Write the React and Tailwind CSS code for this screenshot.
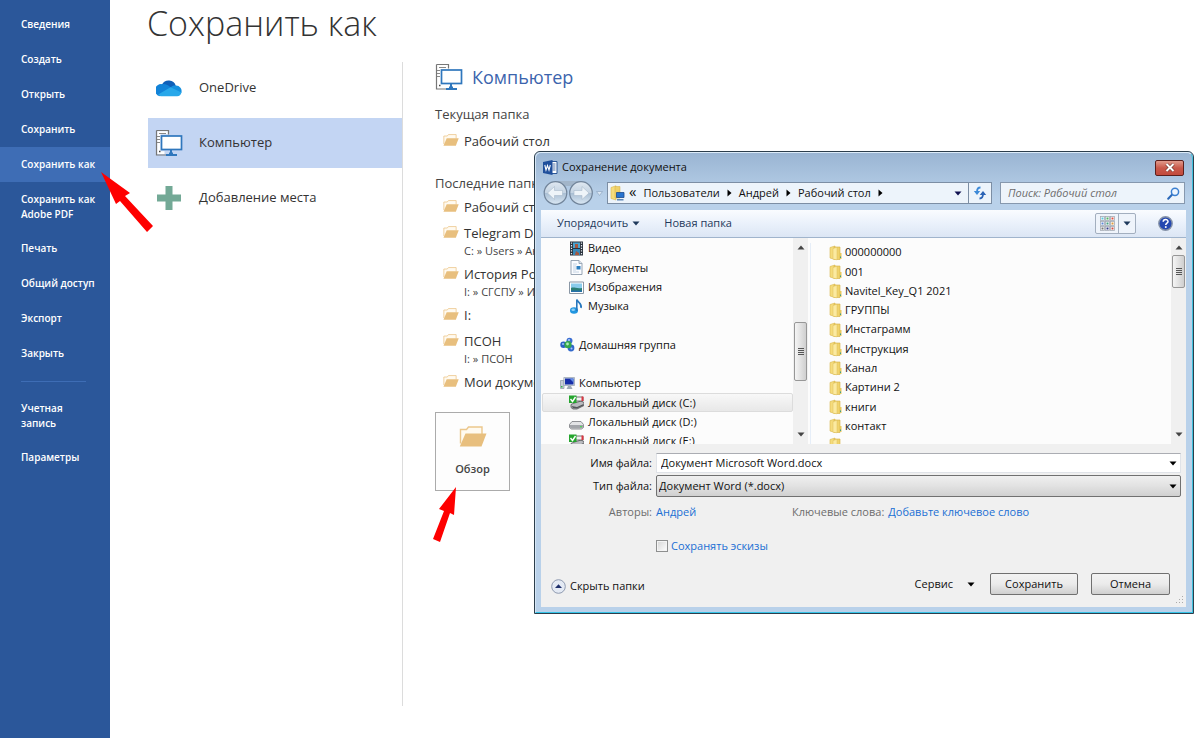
import React, { useState } from 'react';

const menuItems = [
  { label: 'Сведения' },
  { label: 'Создать' },
  { label: 'Открыть' },
  { label: 'Сохранить' },
  { label: 'Сохранить как', active: true },
  { label: 'Сохранить как Adobe PDF', tall: true },
  { label: 'Печать' },
  { label: 'Общий доступ' },
  { label: 'Экспорт' },
  { label: 'Закрыть' },
];

const accountItems = [
  { label: 'Учетная запись', tall: true, narrow: true },
  { label: 'Параметры' },
];

const recentFolders = [
  { name: 'Рабочий стол' },
  { name: 'Telegram Desktop', path: 'C: » Users » Андрей' },
  { name: 'История России', path: 'I: » СГСПУ » История' },
  { name: 'I:' },
  { name: 'ПСОН', path: 'I: » ПСОН' },
  { name: 'Мои документы' },
];

const files = [
  '000000000',
  '001',
  'Navitel_Key_Q1 2021',
  'ГРУППЫ',
  'Инстаграмм',
  'Инструкция',
  'Канал',
  'Картини 2',
  'книги',
  'контакт',
];

/* ---------- icons ---------- */

const CloudIcon = () => (
  <svg width="26" height="18" viewBox="0 0 26 18">
    <path d="M6 5.5a7.5 7.5 0 0 1 13.8 1.2L14 11 5 9z" fill="#0f5fb8" />
    <path d="M6.2 5.2c3-.6 5 .6 7 2L16 9 4 17.3A6 6 0 0 1 6.2 5.2z" fill="#1283d8" />
    <path d="M14.5 8.5c2-1.8 3.6-2 5.3-1.9a5.6 5.6 0 0 1 5.5 7.4L20 13z" fill="#1490df" />
    <path d="M2.2 15.5 14.5 8.3l11 5.2c-.6 2.4-2 3.8-4.3 3.8H6c-1.6 0-2.8-.6-3.8-1.8z" fill="#28a8ea" />
  </svg>
);

const ComputerIcon = ({ fill = '#ffffff' }) => (
  <svg width="28" height="28" viewBox="0 0 28 28" fill="none">
    <path d="M2.2 2.2h10.6v3H5.5v17h4v3H2.2z" fill={fill} />
    <path d="M1.5 1.5h12v4M1.5 1.5v24.5h10" stroke="#777" strokeWidth="1.2" />
    <path d="M4 4.5h7M2 7.5h3M2 10.5h3M2 13.5h3" stroke="#888" strokeWidth="1.1" />
    <path d="M4 22.5h1.5" stroke="#444" strokeWidth="1.5" />
    <rect x="6.5" y="7" width="20" height="13.5" fill={fill} stroke="#2f77bd" strokeWidth="1.7" />
    <path d="M16 21v4M11 26h11" stroke="#2f77bd" strokeWidth="2" />
    <path d="M14 23.5h4v2h-4z" fill="#2f77bd" />
  </svg>
);

const PlusIcon = () => (
  <svg width="26" height="26" viewBox="0 0 26 26">
    <path d="M9.5 1h7v8.5H25v7h-8.5V25h-7v-8.5H1v-7h8.5z" fill="#73a996" />
  </svg>
);

const OpenFolderIcon = ({ className }) => (
  <svg className={className} viewBox="0 0 28 21" preserveAspectRatio="none">
    <path d="M1.5 17.5V3.5h6l2-2.5H23v7" fill="#fffaf0" stroke="#ecc78c" strokeWidth="1.4" />
    <path d="M6.5 7.5H27.5L22.5 20.5H.8z" fill="#e8bf7e" />
  </svg>
);

const FolderIcon = () => (
  <svg width="13" height="16" viewBox="0 0 13 16">
    <path d="M1 2.5 6 1v13.5L1 13z" fill="#f5dc7c" stroke="#d9b74e" strokeWidth=".6" />
    <path d="M5 2h6v12.5H5z" fill="#f0d36c" stroke="#d3ae43" strokeWidth=".6" />
    <path d="M4 3.5 8 2.3v12.5L4 14.2z" fill="#fbeaa0" stroke="#dcbf5d" strokeWidth=".5" />
    <path d="M10.5 8H12.5v6h-2z" fill="#e9c95c" />
    <path d="M11 11.5h1v1.5h-1z" fill="#3e9c8f" />
  </svg>
);

const WordIcon = () => (
  <svg width="15" height="15" viewBox="0 0 15 15">
    <path d="M8 1.5h6v12H8z" fill="#fff" stroke="#2b5797" />
    <path d="M9.5 4h3M9.5 6h3M9.5 8h3M9.5 10h3" stroke="#2b5797" strokeWidth=".8" />
    <path d="M0 2 9.5 0v15L0 13z" fill="#1f4f9c" />
    <path d="m1.8 5 1.2 5 1.5-4.5L6 10l1.3-5" fill="none" stroke="#fff" strokeWidth="1.1" />
  </svg>
);

const NavArrows = () => (
  <svg width="60" height="26" viewBox="0 0 60 26">
    <defs>
      <linearGradient id="orb" x1="0" y1="0" x2="0" y2="1">
        <stop offset="0" stopColor="#dfe8f1" />
        <stop offset=".48" stopColor="#c5d4e3" />
        <stop offset=".52" stopColor="#aabfd4" />
        <stop offset="1" stopColor="#dbe8f4" />
      </linearGradient>
    </defs>
    <path d="M12 1h26v5H12z" fill="#a2b5c9" />
    <circle cx="12.5" cy="13" r="11.3" fill="url(#orb)" stroke="#71849a" strokeWidth="1.2" />
    <circle cx="38" cy="13" r="11.3" fill="url(#orb)" stroke="#71849a" strokeWidth="1.2" />
    <path d="m4.5 13 7-6.5v4h8v5h-8v4z" fill="#eef4f9" stroke="#a9bacb" strokeWidth=".6" />
    <path d="m46 13-7-6.5v4h-8v5h8v4z" fill="#eef4f9" stroke="#a9bacb" strokeWidth=".6" />
    <path d="M53.5 11.5h6L56.5 15.5z" fill="#dce8f5" stroke="#8fa6c2" strokeWidth=".7" />
  </svg>
);

const PathFolderIcon = () => (
  <svg width="15" height="16" viewBox="0 0 15 16">
    <path d="M1 2.5 6 .8V15l-5-1.5z" fill="#f5dc7c" stroke="#d9b74e" strokeWidth=".6" />
    <path d="M5 1.5h5V13H5z" fill="#efd168" stroke="#d3ae43" strokeWidth=".5" />
    <path d="M6.5 7.5h7.5v5H6.5z" fill="#2673cf" stroke="#1d4a8c" strokeWidth=".8" />
    <path d="M7 14h6.5v1.5H7z" fill="#5b86b8" />
  </svg>
);

const Caret = ({ color = '#000' }) => (
  <svg width="8" height="5" viewBox="0 0 8 5" className="shrink-0">
    <path d="M.5.5h7L4 4.5z" fill={color} />
  </svg>
);

const RightCaret = () => (
  <svg width="5" height="8" viewBox="0 0 5 8" className="shrink-0">
    <path d="M.5.5v7L4.5 4z" fill="#000" />
  </svg>
);

const RefreshIcon = () => (
  <svg width="14" height="14" viewBox="0 0 14 14" fill="none">
    <path d="M7.5 1.5C5 1.5 4 3 4 6" stroke="#3d8ad8" strokeWidth="1.8" />
    <path d="M.8 5h6.4L4 9z" fill="#3d8ad8" />
    <path d="M6.5 12.5C9 12.5 10 11 10 8" stroke="#2a63b5" strokeWidth="1.8" />
    <path d="M6.8 9h6.4L10 5z" fill="#2a63b5" />
  </svg>
);

const SearchIcon = () => (
  <svg width="13" height="13" viewBox="0 0 13 13" fill="none">
    <path d="m1.2 11.8 4-4.3" stroke="#2b68b8" strokeWidth="2" strokeLinecap="round" />
    <circle cx="8" cy="4.8" r="3.6" fill="#eef6ff" stroke="#3a7fd0" strokeWidth="1.5" />
  </svg>
);

const ViewIcon = () => {
  const colors = ['#59c8e0', '#4fb563', '#e05040', '#5a86d6', '#3fa080', '#e09a3f', '#777', '#333a8a', '#d04d42'];
  return (
    <svg width="15" height="15" viewBox="0 0 15 15">
      {colors.map((c, i) => {
        const x = (i % 3) * 5;
        const y = Math.floor(i / 3) * 5;
        return (
          <g key={i}>
            <rect x={x + 0.5} y={y + 0.5} width="4" height="4" fill="#fff" stroke="#a3abb5" strokeWidth=".8" />
            <rect x={x + 1.5} y={y + 1.5} width="2" height="2" fill={c} />
          </g>
        );
      })}
    </svg>
  );
};

const HelpIcon = () => (
  <svg width="15" height="15" viewBox="0 0 15 15">
    <circle cx="7.5" cy="7.5" r="6.7" fill="#2448b0" stroke="#8693a8" strokeWidth="1.4" />
    <path d="M5.2 5.8c0-3 4.8-3 4.8-.3 0 1.7-2.3 1.6-2.3 3.5" fill="none" stroke="#fff" strokeWidth="1.5" />
    <path d="M6.9 10.2h1.7v1.7H6.9z" fill="#fff" />
  </svg>
);

const VideoIcon = () => (
  <svg width="15" height="15" viewBox="0 0 15 15">
    <path d="M1 .5h13v14H1z" fill="#2b333d" />
    <path d="M4 1.5h7v5.5H4z" fill="#4aa3cf" />
    <path d="M4 8h7v6H4z" fill="#3889b8" />
    <path d="M6 3h3v4H6zM7 10l3 2v2H6z" fill="#a5573f" />
    <path d="M2.5 1.5v12M12.5 1.5v12" stroke="#e4ebf2" strokeWidth="1.2" strokeDasharray="1.3 1.3" />
  </svg>
);

const DocumentIcon = () => (
  <svg width="15" height="15" viewBox="0 0 15 15">
    <path d="M2 .5h8l3 3v11H2z" fill="#fafcff" stroke="#8c9bab" strokeWidth=".9" />
    <path d="M10 .5v3h3" fill="#dbe4ee" stroke="#8c9bab" strokeWidth=".8" />
    <path d="M4 4h4M4 6h3M4 8h3M4 10h3M4 12h6" stroke="#b8c9dc" strokeWidth=".8" />
    <path d="M7.5 6h4v3.5h-4z" fill="#2d7fc0" />
  </svg>
);

const PictureIcon = () => (
  <svg width="15" height="15" viewBox="0 0 15 15">
    <path d="M.5 2h14v11.5H.5z" fill="#fff" stroke="#8a97a5" />
    <path d="M2 3.5h11V12H2z" fill="#8accec" />
    <path d="M2 8c3-1.5 5 1 11 0v4H2z" fill="#2b7f74" />
    <path d="M2 10.5h11V12H2z" fill="#2771ab" />
  </svg>
);

const MusicIcon = () => (
  <svg width="15" height="15" viewBox="0 0 15 15">
    <ellipse cx="5" cy="11.5" rx="4" ry="3.2" fill="#2196e0" />
    <ellipse cx="4.2" cy="10.8" rx="1.8" ry="1.2" fill="#8fd0f7" />
    <path d="M7.8 12V.5C8.5 3.5 13.5 4.5 12 9" fill="none" stroke="#2878be" strokeWidth="1.6" />
  </svg>
);

const HomeGroupIcon = () => (
  <svg width="15" height="15" viewBox="0 0 15 15">
    <circle cx="9.5" cy="3.7" r="3" fill="#3c6fd2" />
    <circle cx="3.5" cy="7.7" r="3.2" fill="#2a60c5" />
    <circle cx="11" cy="11" r="3.4" fill="#3269cb" />
    <circle cx="8" cy="7.7" r="3.6" fill="#36a84c" />
    <circle cx="9" cy="3" r="1" fill="#b9d2fa" />
    <circle cx="3" cy="7" r="1" fill="#a7c7fa" />
    <circle cx="7.5" cy="7" r="1.4" fill="#b0edb9" />
    <circle cx="11.5" cy="11.5" r="1" fill="#a7c7fa" />
  </svg>
);

const PcIcon = () => (
  <svg width="15" height="15" viewBox="0 0 15 15">
    <path d="M.5 4.5h3.5v8H.5z" fill="#c7ced6" stroke="#8b96a2" strokeWidth=".7" />
    <path d="M1 10h1.5v1.5H1z" fill="#35b34a" />
    <path d="M3.8 1.5h10.7v8H3.8z" fill="#d6dde5" stroke="#95a1ae" strokeWidth=".7" />
    <path d="M5 2.5h8.5v6H5z" fill="#172fa9" />
    <path d="M9.5 2.5h4v4z" fill="#648ee5" />
    <path d="M8 10h3l1.5 3H6.5z" fill="#9ea9b5" />
  </svg>
);

const DiskIcon = ({ checked }) =>
  checked ? (
    <svg width="15" height="15" viewBox="0 0 15 15">
      <path d="M4 8.5 12 6l3 1.5v3L8 14H4l-2-1.5V9.5z" fill="#b9bbbf" stroke="#55575b" strokeWidth=".8" />
      <path d="M2.5 11 8 12l6.5-3v1.5L8 13.5l-4-.2z" fill="#55575b" />
      <path d="M5 2h9v4H5z" fill="#f1f1f3" stroke="#555" strokeWidth=".8" />
      <path d="M12.5 1.5h2v4.5h-2z" fill="#dc3540" />
      <path d="M0 .5h7.5V8H0z" fill="#25a52e" />
      <path d="m1.5 4 2 2.5L6.5 2" fill="none" stroke="#fff" strokeWidth="1.4" />
    </svg>
  ) : (
    <svg width="15" height="15" viewBox="0 0 15 15">
      <path d="M3 6.5h9l2.5 3v3l-2 1.5H2.5l-2-1.5v-3z" fill="#e3e4e6" stroke="#77797d" strokeWidth=".8" />
      <path d="M1 10h13v2.5l-1.5 1h-10L1 12.5z" fill="#a3a5aa" />
      <path d="M11 11h2v1.3h-2z" fill="#4fd75a" />
    </svg>
  );

const treeItems = [
  { label: 'Видео', icon: VideoIcon, nested: true },
  { label: 'Документы', icon: DocumentIcon, nested: true },
  { label: 'Изображения', icon: PictureIcon, nested: true },
  { label: 'Музыка', icon: MusicIcon, nested: true },
  null,
  { label: 'Домашняя группа', icon: HomeGroupIcon },
  null,
  { label: 'Компьютер', icon: PcIcon },
  { label: 'Локальный диск (C:)', icon: DiskIcon, nested: true, checked: true, selected: true },
  { label: 'Локальный диск (D:)', icon: DiskIcon, nested: true },
  { label: 'Локальный диск (E:)', icon: DiskIcon, nested: true, checked: true },
];

/* ---------- backstage parts ---------- */

const MenuButton = ({ item }) => (
  <button
    className={`block w-full pl-[21px] text-left text-[10px] leading-[15px] font-semibold text-white ${
      item.tall ? 'h-[49px]' : 'h-[35px]'
    } ${item.narrow ? 'pr-8' : 'pr-2'} ${item.active ? 'bg-[#3e6db5]' : ''}`}
  >
    {item.label}
  </button>
);

const Sidebar = () => (
  <nav className="w-[110px] shrink-0 bg-[#2b579a] pt-[7px]">
    {menuItems.map((item) => (
      <MenuButton key={item.label} item={item} />
    ))}
    <hr className="mt-[10px] mb-[9px] ml-[21px] mr-6 border-[#3e6db5]" />
    {accountItems.map((item) => (
      <MenuButton key={item.label} item={item} />
    ))}
  </nav>
);

const Place = ({ icon, label, active }) => (
  <button
    className={`flex h-[50px] w-full items-center gap-4 pl-[7px] text-left text-[13px] text-[#333] ${
      active ? 'bg-[#c3d5f3]' : ''
    }`}
  >
    <span className="flex w-7 justify-center">{icon}</span>
    {label}
  </button>
);

const FolderRow = ({ name, path }) => (
  <button className={`flex w-full gap-[5px] pl-2 text-left ${path ? 'h-[41px]' : 'h-[26px]'}`}>
    <OpenFolderIcon className="mt-[6px] h-3 w-4 shrink-0" />
    <span className="block whitespace-nowrap">
      <span className="block text-[13px] leading-[26px] text-[#333]">{name}</span>
      {path && <span className="block text-[11px] leading-[10px] text-[#444]">{path}</span>}
    </span>
  </button>
);

/* ---------- dialog parts ---------- */

const ScrollBar = ({ className, thumbClass }) => (
  <div className={`flex w-[15px] shrink-0 flex-col items-center bg-[#f0f0f0] py-1 ${className}`}>
    <span className="flex h-3 rotate-180 items-center">
      <Caret color="#444" />
    </span>
    <div
      className={`flex w-[13px] flex-col items-center justify-center gap-px rounded-xs border border-[#979797] bg-linear-to-r from-[#f5f5f5] to-[#cfcfcf] ${thumbClass}`}
    >
      <span className="h-px w-[6px] bg-[#555]" />
      <span className="h-px w-[6px] bg-[#555]" />
      <span className="h-px w-[6px] bg-[#555]" />
      <span className="h-px w-[6px] bg-[#555]" />
    </div>
    <span className="mt-auto flex h-3 items-center">
      <Caret color="#444" />
    </span>
  </div>
);

const AddressBar = () => (
  <div className="flex h-[22px] items-center gap-1">
    <button aria-label="Назад и вперед">
      <NavArrows />
    </button>
    <div className="mr-1 flex h-[22px] flex-1 border border-[#7c8ea4] bg-[#edf4fb]">
      <div className="flex flex-1 items-center gap-[7px] pl-[2px] pr-[6px] text-[11px] text-[#111]">
        <PathFolderIcon />
        <span className="-mt-[3px] -ml-[3px] text-[15px]">«</span>
        <button>Пользователи</button>
        <RightCaret />
        <button>Андрей</button>
        <RightCaret />
        <button>Рабочий стол</button>
        <RightCaret />
        <span className="ml-auto flex">
          <Caret color="#101050" />
        </span>
      </div>
      <button className="flex w-[23px] items-center justify-center border-l border-[#7c8ea4]" aria-label="Обновить">
        <RefreshIcon />
      </button>
    </div>
    <div className="flex h-[22px] w-[185px] items-center border border-[#8698ae] bg-[#edf4fb] pl-[7px] pr-1">
      <input
        className="min-w-0 flex-1 bg-transparent text-[11px] italic text-[#444] outline-none placeholder:text-[#6d6d6d]"
        placeholder="Поиск: Рабочий стол"
        aria-label="Поиск"
      />
      <SearchIcon />
    </div>
  </div>
);

const Toolbar = () => (
  <div className="mt-[6px] flex h-[28px] items-center border-b border-[#a0b4cc] bg-linear-to-b from-[#fafcff] via-[#eaf1fb] to-[#dce6f4] pl-4 text-[11px] text-[#1e395b]">
    <button className="flex items-center gap-1">
      Упорядочить
      <Caret color="#1e395b" />
    </button>
    <button className="ml-6">Новая папка</button>
    <div className="ml-auto flex h-[21px] rounded-xs border border-[#a3afbf] bg-[#eff4fb]">
      <button className="flex w-[23px] items-center justify-center border-r border-[#a3afbf]" aria-label="Вид">
        <ViewIcon />
      </button>
      <button className="flex w-4 items-center justify-center" aria-label="Другие виды">
        <Caret color="#1e395b" />
      </button>
    </div>
    <button className="ml-[22px] mr-[13px]" aria-label="Справка">
      <HelpIcon />
    </button>
  </div>
);

const FolderTree = () => (
  <div className="mt-px grid h-[212px] min-w-0 flex-1 auto-rows-fr pl-px">
    {treeItems.map((item, i) => {
      if (!item) return <span key={i} />;
      const Icon = item.icon;
      return (
        <button
          key={item.label}
          className={`flex items-center gap-1 rounded-xs border text-left ${item.nested ? 'pl-[26px]' : 'pl-[17px]'} ${
            item.selected ? 'border-[#dcdcdc] bg-linear-to-b from-[#f8f8f8] to-[#e8e8e8]' : 'border-transparent'
          }`}
        >
          <Icon checked={item.checked} />
          {item.label}
        </button>
      );
    })}
  </div>
);

const Browser = () => (
  <div className="flex h-[206px] overflow-hidden bg-[#fcfcfc] text-[11px] text-[#111]">
    <div className="flex w-[269px] shrink-0">
      <FolderTree />
      <ScrollBar className="mr-[2px]" thumbClass="mt-[68px] h-[59px]" />
    </div>
    <div className="mt-[5px] grid h-[212px] flex-1 auto-rows-fr border-l border-[#e6eef8] pl-[18px]">
      {files.map((name) => (
        <button key={name} className="flex items-center gap-[3px] text-left">
          <FolderIcon />
          {name}
        </button>
      ))}
      <span className="flex items-center">
        <FolderIcon />
      </span>
    </div>
    <ScrollBar thumbClass="mt-[1px] h-[33px]" />
  </div>
);

const SaveForm = () => {
  const [fileName, setFileName] = useState('Документ Microsoft Word.docx');
  const [thumbs, setThumbs] = useState(false);

  return (
    <div className="bg-[#f0f0f0] pt-[9px] pl-[10px] text-[11px] text-[#111]">
      <div className="flex items-center gap-1 pr-[5px]">
        <label htmlFor="file-name" className="w-[101px] text-right">
          Имя файла:
        </label>
        <div className="flex h-5 flex-1 items-center border border-[#e0e3e8] border-t-[#abadb3] bg-white pr-[3px]">
          <input
            id="file-name"
            className="min-w-0 flex-1 pl-1 outline-none"
            value={fileName}
            onChange={(e) => setFileName(e.target.value)}
          />
          <Caret />
        </div>
      </div>
      <div className="mt-[2px] flex items-center gap-1 pr-[5px]">
        <label htmlFor="file-type" className="w-[101px] text-right">
          Тип файла:
        </label>
        <div className="relative flex h-[22px] flex-1 items-center rounded-xs border border-[#707070] bg-linear-to-b from-[#f0f0f0] via-[#e2e2e2] to-[#d0d0d0]">
          <select id="file-type" className="h-full w-full appearance-none pl-[2px] outline-none">
            <option>Документ Word (*.docx)</option>
          </select>
          <span className="pointer-events-none absolute right-[3px] flex">
            <Caret />
          </span>
        </div>
      </div>
      <div className="mt-[6px] flex items-center gap-1 leading-[18px]">
        <span className="w-[101px] text-right text-[#6d6d6d]">Авторы:</span>
        <a href="#" className="w-[132px] text-[#1a6fd4]">
          Андрей
        </a>
        <span className="text-[#6d6d6d]">Ключевые слова:</span>
        <a href="#" className="text-[#1a6fd4]">
          Добавьте ключевое слово
        </a>
      </div>
      <label className="mt-4 ml-[105px] flex w-max items-center gap-[3px] leading-[18px] text-[#1a6fd4]">
        <input
          type="checkbox"
          className="h-3 w-3 appearance-none border border-[#8e8f8f] bg-linear-to-br from-[#d5d5d5] to-[#ffffff] outline-1 -outline-offset-2 outline-[#f4f4f4] checked:bg-[#1a6fd4]"
          checked={thumbs}
          onChange={(e) => setThumbs(e.target.checked)}
        />
        Сохранять эскизы
      </label>
      <div className="mt-[18px] flex items-center pr-4">
        <button className="mt-1 flex items-center gap-1">
          <svg width="15" height="15" viewBox="0 0 15 15">
            <circle cx="7.5" cy="7.5" r="6.8" fill="#e4eaf4" stroke="#8e9ab0" />
            <path d="M4 9h7L7.5 5.3z" fill="#1d2f6b" />
          </svg>
          Скрыть папки
        </button>
        <button className="ml-auto flex items-center gap-[14px]">
          Сервис
          <Caret />
        </button>
        <button className="ml-[15px] h-[22px] w-[88px] rounded-xs border border-[#707070] bg-linear-to-b from-[#f3f3f3] via-[#ebebeb] to-[#cfcfcf]">
          Сохранить
        </button>
        <button className="ml-[13px] h-[22px] w-[79px] rounded-xs border border-[#707070] bg-linear-to-b from-[#f3f3f3] via-[#ebebeb] to-[#cfcfcf]">
          Отмена
        </button>
      </div>
      <div className="flex h-3 justify-end pr-[2px]">
        <svg width="9" height="9" viewBox="0 0 9 9">
          <path d="M7 1h1v1H7zM4 4h1v1H4zM7 4h1v1H7zM1 7h1v1H1zM4 7h1v1H4zM7 7h1v1H7z" fill="#aaa" />
        </svg>
      </div>
    </div>
  );
};

const SaveDialog = () => (
  <div
    role="dialog"
    aria-label="Сохранение документа"
    className="absolute top-[151px] right-[6px] left-[534px] rounded-t-md border border-[#2c3e4c] bg-[#b9d1ea]"
  >
    <div className="rounded-t-md border border-t-[#dcebf8] border-r-[#3fc0dc] border-b-[#35c4e8] border-l-[#d6e6f5] bg-linear-to-b from-[#9ab5d3] from-0% to-[#b9d1ea] to-10% pb-[5px]">
      <div className="flex h-[29px] items-center gap-1 pl-[7px] pr-2">
        <WordIcon />
        <h2 className="text-[11px] text-[#111]">Сохранение документа</h2>
        <button
          aria-label="Закрыть"
          className="ml-auto flex h-4 w-[29px] items-center justify-center rounded-xs border border-[#5c1f1c] bg-linear-to-b from-[#e09a8c] via-[#c9584a] to-[#c24a3c]"
        >
          <svg width="10" height="9" viewBox="0 0 10 9">
            <path d="m1.5 1 7 7m0-7-7 7" stroke="#6d3630" strokeWidth="3.2" />
            <path d="m1.5 1 7 7m0-7-7 7" stroke="#fff" strokeWidth="2" />
          </svg>
        </button>
      </div>
      <div className="px-[7px]">
        <AddressBar />
      </div>
      <div className="ml-[5px] mr-[6px]">
        <Toolbar />
        <Browser />
        <SaveForm />
      </div>
    </div>
  </div>
);

const App = () => (
  <div className="relative flex min-h-screen overflow-hidden bg-white font-['Open_Sans','Noto_Sans',sans-serif]">
    <Sidebar />
    <main className="min-w-0 flex-1 pl-[37px]">
      <h1 className="h-[62px] text-[34px] leading-[46px] font-light text-[#333]">Сохранить как</h1>
      <div className="flex">
        <section className="flex h-[644px] w-[256px] shrink-0 flex-col gap-[5px] border-r border-[#dcdcdc] pt-px pl-px">
          <Place icon={<CloudIcon />} label="OneDrive" />
          <Place icon={<ComputerIcon />} label="Компьютер" active />
          <Place icon={<PlusIcon />} label="Добавление места" />
        </section>
        <section className="min-w-0 flex-1 pl-8">
          <h2 className="flex h-[30px] items-center gap-[9px] text-[18px] text-[#3b64ad]">
            <ComputerIcon />
            Компьютер
          </h2>
          <h3 className="mt-3 text-[13px] leading-5 text-[#444]">Текущая папка</h3>
          <div className="mt-1">
            <FolderRow name="Рабочий стол" />
          </div>
          <h3 className="mt-[19px] mb-px text-[13px] leading-5 text-[#444]">Последние папки</h3>
          {recentFolders.map((folder) => (
            <FolderRow key={folder.name} name={folder.name} path={folder.path} />
          ))}
          <button className="mt-[17px] flex h-[79px] w-[75px] flex-col items-center justify-center gap-[14px] border border-[#ababab] bg-[#fdfdfd] text-[11px] font-semibold text-[#444]">
            <OpenFolderIcon className="h-[21px] w-7" />
            Обзор
          </button>
        </section>
      </div>
    </main>

    <SaveDialog />

    {/* pointers to the menu item and the browse button */}
    <svg className="absolute top-[172px] left-[100px]" width="54" height="61" viewBox="0 0 54 61">
      <path d="M1 0 30 21 25 24 53 54 47 60 20 29 16 32z" fill="#fe0000" />
    </svg>
    <svg className="absolute top-[487px] left-[432px]" width="25" height="56" viewBox="0 0 25 56">
      <path d="M24 0 22 28 18 26 8 55 1 52 12 24 7 22z" fill="#fe0000" />
    </svg>
  </div>
);

export default App;
